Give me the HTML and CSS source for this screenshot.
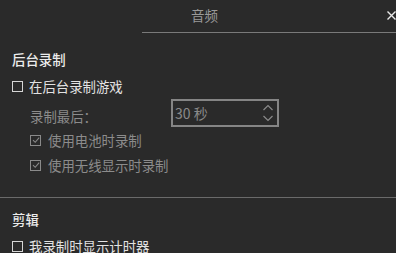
FILE: index.html
```html
<!DOCTYPE html>
<html lang="zh">
<head>
<meta charset="utf-8">
<link rel="stylesheet" href="styles.css">
</head>
<body>
<div class="win">
  <div class="header">
    <span class="title">音频</span>
    <span class="close">
      <svg width="9" height="9" viewBox="0 0 9 9"><path d="M0.5 0.5L8.5 8.5M8.5 0.5L0.5 8.5" stroke="#e8e8e8" stroke-width="1.4"/></svg>
    </span>
  </div>
  <div class="rule-top"></div>

  <div class="section first">
    <div class="heading">后台录制</div>
    <div class="row main">
      <span class="box"></span><span>在后台录制游戏</span>
    </div>
    <div class="row field">
      <span class="label">录制最后：</span>
      <div class="input">
        <span class="val">30 秒</span>
        <svg class="spin" width="12" height="22" viewBox="0 0 12 22"><path d="M1.5 8L6 3.5L10.5 8M1.5 14L6 18.5L10.5 14" fill="none" stroke="#8a8a8a" stroke-width="1.2"/></svg>
      </div>
    </div>
    <div class="row sub">
      <span class="box checked"><svg width="10" height="10" viewBox="0 0 10 10"><path d="M2 5.2L4.2 7.3L8.2 2.6" fill="none" stroke="#8a8a8a" stroke-width="1.1"/></svg></span><span>使用电池时录制</span>
    </div>
    <div class="row sub">
      <span class="box checked"><svg width="10" height="10" viewBox="0 0 10 10"><path d="M2 5.2L4.2 7.3L8.2 2.6" fill="none" stroke="#8a8a8a" stroke-width="1.1"/></svg></span><span>使用无线显示时录制</span>
    </div>
  </div>

  <div class="rule-full"></div>

  <div class="section second">
    <div class="heading">剪辑</div>
    <div class="row main">
      <span class="box"></span><span>我录制时显示计时器</span>
    </div>
  </div>
</div>
</body>
</html>
```

FILE: styles.css
```css
html, body {
  margin: 0;
  padding: 0;
  background: #2a2a2a;
  overflow: hidden;
}
.win {
  width: 396px;
  height: 253px;
  font-family: "Noto Sans CJK SC", "Noto Sans", sans-serif;
  font-size: 13.4px;
  color: #e2e2e2;
}
.header {
  height: 32px;
  display: flex;
  align-items: center;
  justify-content: space-between;
  padding-left: 191px;
  padding-right: 0;
}
.title {
  color: #9a9a9a;
  font-size: 13.5px;
  line-height: 16px;
  margin-top: -2px;
}
.close {
  display: flex;
  width: 9px;
  height: 9px;
  margin-right: 0;
  margin-top: -1px;
}
.rule-top {
  margin-left: 142px;
  height: 1px;
  background: #7a7a7a;
}
.rule-full {
  height: 1px;
  background: #6a6a6a;
  margin-top: 22px;
}
.section {
  padding-left: 12px;
}
.section.first {
  padding-top: 16px;
}
.section.second {
  padding-top: 11px;
}
.heading {
  height: 20px;
  line-height: 20px;
  color: #ececec;
  font-weight: 500;
}
.row {
  display: flex;
  align-items: center;
  height: 20px;
  line-height: 20px;
}
.row.main {
  margin-top: 7px;
}
.row.sub {
  margin-left: 18px;
  margin-top: 3px;
  color: #8c8c8c;
}
.row.sub + .row.sub {
  margin-top: 5px;
}
.row.field {
  margin-top: 3px;
  margin-left: 18px;
  height: 28px;
  color: #8c8c8c;
}
.label {
  width: 141px;
  margin-top: 6px;
}
.box {
  width: 9px;
  height: 9px;
  border: 1px solid #d6d6d6;
  margin-right: 6px;
  display: flex;
  align-items: center;
  justify-content: center;
  flex: none;
}
.box.checked {
  border-color: #8a8a8a;
  margin-right: 7px;
}
.box svg {
  flex: none;
}
.input {
  width: 99px;
  height: 24px;
  border: 2px solid #858585;
  display: flex;
  align-items: center;
  justify-content: space-between;
  padding: 0 3px 0 2px;
  box-sizing: content-box;
}
.val {
  color: #8a8a8a;
  font-size: 14px;
}
.spin {
  display: block;
}
```
